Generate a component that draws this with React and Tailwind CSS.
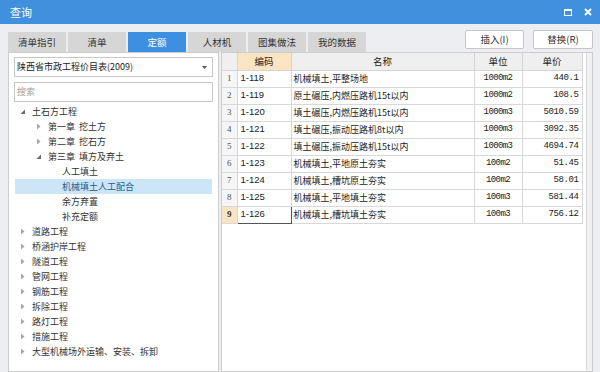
import React from "react";

const TABS = ["清单指引", "清单", "定额", "人材机", "图集做法", "我的数据"];

const TREE = [
  { label: "土石方工程", level: 0, arrow: "open" },
  { label: "第一章  挖土方", level: 1, arrow: "closed" },
  { label: "第二章  挖石方", level: 1, arrow: "closed" },
  { label: "第三章  填方及弃土", level: 1, arrow: "open" },
  { label: "人工填土", level: 2 },
  { label: "机械填土人工配合", level: 2, selected: true },
  { label: "余方弃置", level: 2 },
  { label: "补充定额", level: 2 },
  { label: "道路工程", level: 0, arrow: "closed" },
  { label: "桥涵护岸工程", level: 0, arrow: "closed" },
  { label: "隧道工程", level: 0, arrow: "closed" },
  { label: "管网工程", level: 0, arrow: "closed" },
  { label: "钢筋工程", level: 0, arrow: "closed" },
  { label: "拆除工程", level: 0, arrow: "closed" },
  { label: "路灯工程", level: 0, arrow: "closed" },
  { label: "措施工程", level: 0, arrow: "closed" },
  { label: "大型机械场外运输、安装、拆卸", level: 0, arrow: "closed" },
];

const ROWS = [
  ["1-118", "机械填土,平整场地", "1000m2", "440.1"],
  ["1-119", "原土碾压,内燃压路机15t以内", "1000m2", "108.5"],
  ["1-120", "填土碾压,内燃压路机15t以内", "1000m3", "5010.59"],
  ["1-121", "填土碾压,振动压路机8t以内", "1000m3", "3092.35"],
  ["1-122", "填土碾压,振动压路机15t以内", "1000m3", "4694.74"],
  ["1-123", "机械填土,平地原土夯实", "100m2", "51.45"],
  ["1-124", "机械填土,槽坑原土夯实", "100m2", "58.01"],
  ["1-125", "机械填土,平地填土夯实", "100m3", "581.44"],
  ["1-126", "机械填土,槽坑填土夯实", "100m3", "756.12"],
];

const indent = ["pl-[5px]", "pl-[21px]", "pl-[47px]"];

function Arrow({ type }) {
  if (type === "open") {
    return (
      <svg width="6" height="6" viewBox="0 0 6 6" className="mr-[6px]">
        <path d="M5 0.5 L5 5 L0.5 5 Z" fill="#6a6a6a" />
      </svg>
    );
  }
  if (type === "closed") {
    return (
      <svg width="6" height="7" viewBox="0 0 6 7" className="mr-[6px]">
        <path d="M1 0.5 L4.5 3.5 L1 6.5 Z" fill="#a8a8a8" />
      </svg>
    );
  }
  return null;
}

export default function App() {
  const cjk = { fontFamily: '"Noto Sans CJK SC", "Noto Sans", sans-serif' };
  return (
    <div
      className="w-[600px] h-[372px] overflow-hidden flex flex-col bg-[#eceef1] text-[#222]"
      style={cjk}
    >
      {/* title bar */}
      <div className="h-[24px] shrink-0 bg-[#4190dd] flex items-center justify-between pl-[10px] pr-[8px] text-white">
        <span className="text-[11px] leading-none">查询</span>
        <div className="flex items-center gap-[12px]">
          <div className="w-[8px] h-[7px] border border-white border-t-[2px]" />
          <svg width="8" height="8" viewBox="0 0 8 8">
            <path d="M1 1 L7 7 M7 1 L1 7" stroke="white" strokeWidth="1.8" />
          </svg>
        </div>
      </div>

      <div className="flex-1 flex flex-col pl-[8px] pr-[7px] min-h-0">
        {/* tabs + buttons */}
        <div className="h-[28px] shrink-0 flex justify-between">
          <div className="flex gap-[2px] mt-[8px] h-[20px]">
            {TABS.map((t) => (
              <div
                key={t}
                className={`w-[58px] flex items-center justify-center text-[9.5px] ${
                  t === "定额" ? "bg-[#3d8fe2] text-white" : "bg-[#d6d6d6] text-[#333]"
                }`}
              >
                {t}
              </div>
            ))}
          </div>
          <div className="flex gap-[9px] mt-[6px] h-[19px]">
            <button className="w-[59px] bg-white border border-[#c6c6c6] rounded-[2px] text-[9.5px] text-[#333]">
              插入(I)
            </button>
            <button className="w-[60px] bg-white border border-[#c6c6c6] rounded-[2px] text-[9.5px] text-[#333]">
              替换(R)
            </button>
          </div>
        </div>

        {/* main */}
        <div className="flex-1 flex gap-[2px] min-h-0">
          {/* left panel */}
          <div className="w-[211px] shrink-0 bg-white border border-[#cdcdcd] pt-[4px]">
            <div className="mx-[5px] h-[20px] border border-[#c8c8c8] flex items-center justify-between pl-[2px] pr-[5px]">
              <span className="text-[9px] whitespace-nowrap">陕西省市政工程价目表(2009)</span>
              <svg width="5" height="3" viewBox="0 0 5 3">
                <path d="M0 0 L5 0 L2.5 3 Z" fill="#555" />
              </svg>
            </div>
            <div className="mx-[5px] mt-[5px] h-[20px] border border-[#c8c8c8] flex items-center pl-[2px]">
              <span className="text-[9px] text-[#a0a0a0]">搜索</span>
            </div>
            <div className="mt-[2px]">
              {TREE.map((n) => (
                <div
                  key={n.label}
                  className={`h-[15px] flex items-center ${indent[n.level]} mx-[6px] text-[9px] whitespace-nowrap ${
                    n.selected ? "bg-[#cde6f7] text-[#2a5c8a]" : "text-[#333]"
                  }`}
                >
                  <Arrow type={n.arrow} />
                  <span className="whitespace-pre">{n.label}</span>
                </div>
              ))}
            </div>
          </div>

          {/* table */}
          <div className="flex-1 bg-white border border-[#cdcdcd] flex min-w-0">
            <div className="flex-1">
              <table className="table-fixed border-collapse w-[360px]">
                <colgroup>
                  <col className="w-[15px]" />
                  <col className="w-[54px]" />
                  <col className="w-[183px]" />
                  <col className="w-[48px]" />
                  <col className="w-[60px]" />
                </colgroup>
                <thead>
                  <tr className="h-[17px] text-[9.5px]">
                    <th className="bg-[#efefef] border border-[#d4d4d4] border-t-0 border-l-0" />
                    <th className="bg-[#fbe4c2] border border-[#d4d4d4] border-t-0 font-normal">编码</th>
                    <th className="bg-[#efefef] border border-[#d4d4d4] border-t-0 font-normal">名称</th>
                    <th className="bg-[#efefef] border border-[#d4d4d4] border-t-0 font-normal">单位</th>
                    <th className="bg-[#efefef] border border-[#d4d4d4] border-t-0 font-normal">单价</th>
                  </tr>
                </thead>
                <tbody>
                  {ROWS.map((r, i) => {
                    const sel = i === ROWS.length - 1;
                    return (
                      <tr key={r[0]} className="h-[17px]">
                        <td
                          className={`border border-[#d8d8d8] border-l-0 text-center text-[9px] ${
                            sel ? "bg-[#fbe4c2] font-bold text-[#333]" : "bg-[#f6f6f6] text-[#555]"
                          }`}
                          style={{ fontFamily: '"Liberation Serif", serif' }}
                        >
                          {i + 1}
                        </td>
                        <td
                          className={`border pl-[3px] text-[9.5px] ${
                            sel ? "border-[#555]" : "border-[#d8d8d8]"
                          }`}
                          style={{ fontFamily: '"Liberation Sans", sans-serif' }}
                        >
                          {r[0]}
                        </td>
                        <td className="border border-[#d8d8d8] pl-[2px] text-[9px] whitespace-nowrap">{r[1]}</td>
                        <td
                          className="border border-[#d8d8d8] text-center text-[9px] tracking-[-0.6px]"
                          style={{ fontFamily: '"Liberation Mono", monospace' }}
                        >
                          {r[2]}
                        </td>
                        <td
                          className="border border-[#d8d8d8] text-right pr-[3px] text-[9px] tracking-[-0.4px]"
                          style={{ fontFamily: '"Liberation Mono", monospace' }}
                        >
                          {r[3]}
                        </td>
                      </tr>
                    );
                  })}
                </tbody>
              </table>
            </div>
            <div className="w-[6px] bg-[#f1f1f1] border-l border-[#dcdcdc]" />
          </div>
        </div>
      </div>
    </div>
  );
}
